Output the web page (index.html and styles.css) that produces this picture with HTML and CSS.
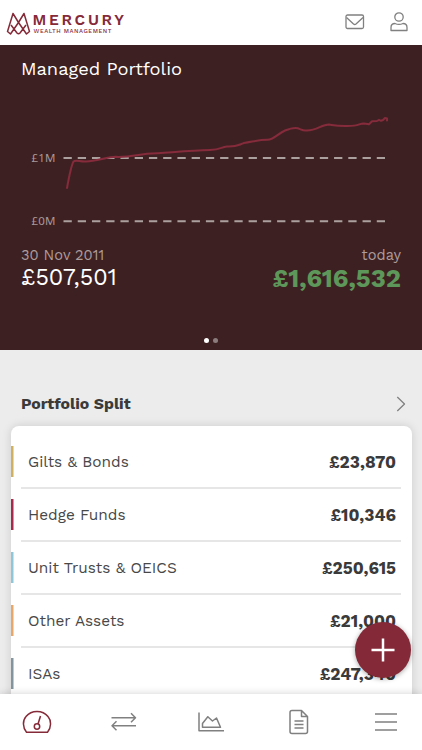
FILE: index.html
```html
<!DOCTYPE html>
<html lang="en">
<head>
    <meta charset="UTF-8">
    <meta name="viewport" content="width=device-width, initial-scale=1.0">
    <title>Mercury Wealth Management</title>
    <link rel="stylesheet" href="styles.css">
</head>
<body>
    <div class="app">
        <header class="header">
            <svg class="logo" width="130" height="44" viewBox="0 0 130 44">
                <path class="logo-mark" d="M13 12.500L7.500 30.500L10.500 33L18.500 21.500L24 12.500L29.500 30.500L26.500 33L18.500 21.500ZM11 24L17 32Q18.500 33.500 20 32L26 24"/>
                <text class="logo-name" x="32.500" y="24" textLength="91.500">MERCURY</text>
                <text class="logo-sub" x="33.500" y="31.500" textLength="78">WEALTH MANAGEMENT</text>
            </svg>
            <div class="header-icons">
                <svg class="icon" width="20" height="16" viewBox="0 0 20 16">
                    <rect x="1" y="1" width="17.500" height="13.500" rx="1.500"/>
                    <path d="M1.500 3.500L8.500 10Q9.750 11 11 10L18 3.500"/>
                </svg>
                <svg class="icon" width="18" height="20" viewBox="0 0 18 20">
                    <circle cx="9" cy="5" r="4.200"/>
                    <path d="M1 18.500V15.500Q1 11.500 5 11.500Q9 13.300 13 11.500Q17 11.500 17 15.500V18.500Z"/>
                </svg>
            </div>
        </header>

        <section class="summary">
            <h1 class="summary-title">Managed Portfolio</h1>
            <svg class="chart" width="422" height="145" viewBox="0 90 422 145">
                <text class="axis-label" x="31.500" y="161.700" textLength="24">£1M</text>
                <text class="axis-label" x="31.500" y="225.200" textLength="24">£0M</text>
                <path class="grid-line" d="M63.500 158H385M63.500 221.300H385"/>
                <path class="chart-line" d="M67 188C69 177 71 166 73.500 161.500C76 159.500 80 162 86 161.500C97 161 107 157 116 156.800C126 157.500 137 155 147 153.800C170 152.500 190 150.500 210 150C221 149.500 221 147 227 146.500C237 147 238 145 244 143C252 142 258 139.800 267 139.800C274 140 277 134 285 130.500C300 124.500 299 131 306 130.500C317 131 321 124.500 329 124.500C335 125.500 336 126 345 126C360 126.500 358 123.500 364 123.500L369 124.200L372 121.200L377 121L379 119.800L381 120.800L383 120L385 118L387 118.500L387 120.500"/>
            </svg>
            <div class="totals">
                <div class="total">
                    <span class="total-label">30 Nov 2011</span>
                    <span class="total-value">£507,501</span>
                </div>
                <div class="total total-right">
                    <span class="total-label">today</span>
                    <span class="total-value value-today">£1,616,532</span>
                </div>
            </div>
            <div class="dots">
                <span class="dot active"></span>
                <span class="dot"></span>
            </div>
        </section>

        <main class="content">
            <div class="split-header">
                <h2 class="split-title">Portfolio Split</h2>
                <svg class="icon" width="10" height="16" viewBox="0 0 10 16">
                    <path d="M1.300 1L8.500 8L1.300 15"/>
                </svg>
            </div>
            <div class="card">
                <div class="row gilts">
                    <span class="name">Gilts &amp; Bonds</span>
                    <span class="amount">£23,870</span>
                </div>
                <div class="row hedge">
                    <span class="name">Hedge Funds</span>
                    <span class="amount">£10,346</span>
                </div>
                <div class="row trusts">
                    <span class="name">Unit Trusts &amp; OEICS</span>
                    <span class="amount">£250,615</span>
                </div>
                <div class="row other">
                    <span class="name">Other Assets</span>
                    <span class="amount">£21,000</span>
                </div>
                <div class="row isas">
                    <span class="name">ISAs</span>
                    <span class="amount">£247,340</span>
                </div>
            </div>
        </main>

        <button class="add-btn" aria-label="Add">
            <svg width="24" height="24" viewBox="0 0 24 24"><path d="M12 0.500V23.500M0.500 12H23.500"/></svg>
        </button>

        <nav class="nav">
            <svg class="icon nav-active" height="24" viewBox="0 0 30 24">
                <path d="M4.500 22.200C0.500 17.500 0.500 10.500 4 6.500C9.500 -0.200 20.500 -0.200 26 6.500C29.500 10.500 29.500 17.500 25.500 22.200Z"/>
                <circle cx="15" cy="16.500" r="2.700"/>
                <path d="M16 14L18.500 6"/>
            </svg>
            <svg class="icon" height="20" viewBox="0 0 26 20">
                <path d="M0.500 5.800H24.500M20 1.300L24.500 5.800L20 10.300M25 13.800H1M5.500 9.300L1 13.800L5.500 18.300"/>
            </svg>
            <svg class="icon" height="20" viewBox="0 0 26 20">
                <path d="M1 0.500V18.800H26M4.500 15.300V11.500L9.800 4.700L14.500 9L18.500 6L22.500 15.300Z"/>
            </svg>
            <svg class="icon" height="26" viewBox="0 0 20 26">
                <path d="M3 1.500H12.500L18.500 7.500V22.500Q18.500 24.500 16.500 24.500H3Q1 24.500 1 22.500V3.500Q1 1.500 3 1.500ZM12.500 1.500V7.500H18.500M5.500 12H14.500M5.500 15.500H14.500M5.500 19H14.500"/>
            </svg>
            <svg class="icon" height="18" viewBox="0 0 22 18">
                <path d="M0 1H22M0 9H22M0 17H22"/>
            </svg>
        </nav>
    </div>
</body>
</html>
```
FILE: styles.css
```css
* {
    box-sizing: border-box;
}

body {
    margin: 0;
    font-family: "Work Sans", Inter, "Noto Sans", sans-serif;
    color: #3a3a3a;
    background-color: #ececec;
}

.app {
    position: relative;
    display: flex;
    flex-direction: column;
    height: 750px;
    overflow: hidden;
}

.header {
    display: flex;
    justify-content: space-between;
    align-items: center;
    height: 45px;
    padding-right: 14px;
    background-color: #fff;
}

.header-icons {
    display: flex;
    align-items: center;
    gap: 25px;
    padding-bottom: 1px;
}

.logo-mark {
    fill: none;
    stroke: #852a39;
    stroke-width: 1.5;
    stroke-linejoin: round;
}

.logo-name {
    font-size: 15.5px;
    font-weight: 600;
    fill: #852a39;
}

.logo-sub {
    font-size: 6px;
    font-weight: 500;
    fill: #852a39;
}

.icon {
    display: block;
    fill: none;
    stroke: #808080;
    stroke-width: 1.3;
    stroke-linejoin: round;
}

/* portfolio summary */
.summary {
    display: flex;
    flex-direction: column;
    height: 305px;
    background-color: #3d2122;
    color: #fff;
}

.summary-title {
    height: 45px;
    margin: 0;
    padding: 11px 21px 0;
    font-size: 18.3px;
    font-weight: 400;
    line-height: 25px;
}

.chart {
    display: block;
}

.axis-label {
    font-family: "Noto Sans", sans-serif;
    font-size: 11.5px;
    fill: #a99899;
}

.grid-line {
    stroke: #aca09f;
    stroke-width: 2;
    stroke-dasharray: 8.3 5.94;
}

.chart-line {
    fill: none;
    stroke: #852b3b;
    stroke-width: 2;
    stroke-linecap: round;
    stroke-linejoin: round;
}

.totals {
    display: flex;
    justify-content: space-between;
    padding: 11px 21px 0;
}

.total {
    display: flex;
    flex-direction: column;
}

.total-right {
    align-items: flex-end;
}

.total-label {
    font-size: 14.6px;
    line-height: 19px;
    color: #ad9c9d;
}

.total-value {
    font-size: 23.2px;
    line-height: 24px;
}

.value-today {
    font-size: 25.5px;
    font-weight: 700;
    line-height: 26px;
    color: #5d9759;
}

.dots {
    display: flex;
    justify-content: center;
    gap: 4px;
    margin-top: auto;
    padding-bottom: 7px;
}

.dot {
    width: 5px;
    height: 5px;
    border-radius: 50%;
    background-color: #8b7d7d;
}

.dot.active {
    background-color: #fff;
}

/* split list */
.content {
    flex: 1;
    min-height: 0;
    overflow: hidden;
    padding: 41px 10.5px 0;
}

.split-header {
    display: flex;
    justify-content: space-between;
    align-items: center;
    height: 25px;
    padding: 0 5.5px 0 10.5px;
}

.split-title {
    margin: 0;
    font-size: 15.8px;
    font-weight: 700;
}

.card {
    height: 300px;
    margin-top: 10px;
    padding-top: 10px;
    border-radius: 8px;
    background-color: #fff;
    box-shadow: 0 0 10px rgba(0, 0, 0, 0.14);
}

.row {
    display: flex;
    justify-content: space-between;
    align-items: center;
    height: 53px;
    padding: 0 15.5px 2px 17.5px;
    background:
        linear-gradient(var(--bar), var(--bar)) 0 10px / 2.5px 31px no-repeat,
        linear-gradient(#e6e6e6, #e6e6e6) 50% 100% / calc(100% - 21px) 2px no-repeat;
}

.gilts { --bar: #cfb05e; }
.hedge { --bar: #a72a4d; }
.trusts { --bar: #8ec8d8; }
.other { --bar: #e7a66a; }
.isas { --bar: #83949e; }

.name {
    font-size: 15.4px;
    color: #484848;
}

.amount {
    font-size: 17.1px;
    font-weight: 700;
}

.add-btn {
    position: absolute;
    right: 11px;
    bottom: 72px;
    display: flex;
    justify-content: center;
    align-items: center;
    width: 56px;
    height: 56px;
    padding: 0;
    border: none;
    border-radius: 50%;
    background-color: #842937;
    box-shadow: 0 1px 5px rgba(0, 0, 0, 0.35);
}

.add-btn path {
    stroke: #fff;
    stroke-width: 2.5;
}

.nav {
    display: flex;
    justify-content: space-between;
    align-items: center;
    height: 56px;
    padding: 0 21px 0 21.5px;
    background-color: #fff;
    box-shadow: 0 0 8px rgba(0, 0, 0, 0.18);
}

.nav .icon {
    width: 30px;
    stroke-width: 1.5;
}

.nav .nav-active {
    stroke: #852a39;
}
```
